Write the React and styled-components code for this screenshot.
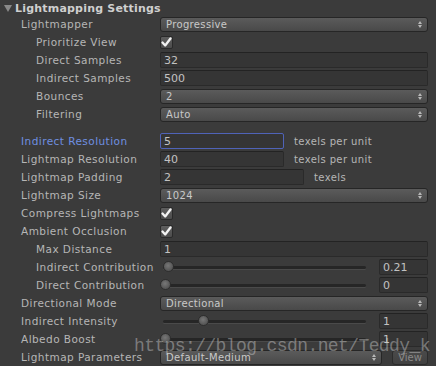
import React from "react";
import styled, { createGlobalStyle } from "styled-components";

const Global = createGlobalStyle`
  html, body { margin: 0; padding: 0; background: #3b3b3b; }
`;

const Panel = styled.div`
  position: relative;
  width: 436px;
  height: 366px;
  overflow: hidden;
  background: #3b3b3b;
  font-family: "DejaVu Sans", sans-serif;
  font-size: 10.5px;
  color: #b6b6b6;
  display: flex;
  flex-direction: column;
  padding-top: 1px;
  box-sizing: border-box;
`;

const Header = styled.div`
  display: flex;
  align-items: center;
  height: 14px;
  padding-left: 4px;
  gap: 3px;
  font-weight: bold;
  font-size: 11px;
  letter-spacing: 0.2px;
  color: #cfcfcf;
  flex-shrink: 0;
`;

const Triangle = styled.span`
  width: 0;
  height: 0;
  border-left: 4px solid transparent;
  border-right: 4px solid transparent;
  border-top: 7px solid #8a8a8a;
`;

const Row = styled.div`
  display: flex;
  align-items: center;
  height: 18px;
  flex-shrink: 0;
`;

const Spacer = styled.div`
  height: 9px;
  flex-shrink: 0;
`;

const Label = styled.div`
  width: 160px;
  box-sizing: border-box;
  padding-left: ${(p) => p.$indent}px;
  white-space: nowrap;
  letter-spacing: 0.45px;
  color: ${(p) => (p.$active ? "#6f8fe0" : "#b6b6b6")};
`;

const Value = styled.div`
  flex: 1;
  display: flex;
  align-items: center;
  padding-right: 8px;
  gap: 10px;
  min-width: 0;
`;

const Field = styled.div`
  box-sizing: border-box;
  height: 16px;
  width: ${(p) => (p.$w ? `${p.$w}px` : "auto")};
  flex: ${(p) => (p.$w ? "none" : "1")};
  background: #353535;
  border: 1px solid ${(p) => (p.$focus ? "#4f63b8" : "#2a2a2a")};
  border-top-color: ${(p) => (p.$focus ? "#4f63b8" : "#232323")};
  border-radius: 2px;
  padding-left: 3px;
  display: flex;
  align-items: center;
  color: #c2c2c2;
  font-size: 11px;
`;

const Unit = styled.span`
  font-size: 10px;
  letter-spacing: 0.4px;
  color: #b6b6b6;
`;

const Dropdown = styled.div`
  box-sizing: border-box;
  flex: 1;
  height: 15px;
  background: linear-gradient(#5b5b5b, #494949);
  border: 1px solid #262626;
  border-radius: 3px;
  display: flex;
  align-items: center;
  justify-content: space-between;
  padding: 0 5px 0 5px;
  color: #c9c9c9;
  font-size: 10px;
  letter-spacing: 0.35px;
`;

const Arrows = styled.span`
  display: flex;
  flex-direction: column;
  gap: 1px;
  &::before, &::after {
    content: "";
    width: 0;
    height: 0;
    border-left: 2px solid transparent;
    border-right: 2px solid transparent;
  }
  &::before { border-bottom: 3px solid #b8b8b8; }
  &::after { border-top: 3px solid #b8b8b8; }
`;

const Check = styled.div`
  box-sizing: border-box;
  width: 13px;
  height: 13px;
  background: linear-gradient(#5e5e5e, #4c4c4c);
  border: 1px solid #2a2a2a;
  border-radius: 2px;
  display: flex;
  align-items: center;
  justify-content: center;
`;

const Slider = styled.div`
  position: relative;
  flex: 1;
  height: 16px;
  display: flex;
  align-items: center;
`;

const Track = styled.div`
  flex: 1;
  height: 3px;
  margin: 0 3px;
  background: #262626;
  border-radius: 2px;
  box-shadow: 0 1px 0 #4a4a4a;
`;

const Thumb = styled.div`
  position: absolute;
  top: 2px;
  width: 11px;
  height: 11px;
  border-radius: 50%;
  background: radial-gradient(circle at 45% 40%, #777, #555 70%);
  border: 1px solid #2e2e2e;
  box-sizing: border-box;
`;

const SmallField = styled(Field)`
  width: 49px;
  flex: none;
`;

const ViewButton = styled.div`
  box-sizing: border-box;
  width: 36px;
  height: 15px;
  border: 1px solid #2c2c2c;
  border-radius: 3px;
  background: linear-gradient(#4a4a4a, #414141);
  color: #8a8a8a;
  font-size: 10px;
  display: flex;
  align-items: center;
  justify-content: center;
`;

const Watermark = styled.div`
  position: absolute;
  left: 134px;
  top: 336px;
  font-family: "Liberation Mono", monospace;
  font-size: 18px;
  letter-spacing: -0.6px;
  color: rgba(215, 215, 215, 0.42);
  white-space: nowrap;
  pointer-events: none;
`;

const CheckMark = () => (
  <svg width="11" height="11" viewBox="0 0 11 11">
    <path d="M1.5 5.5 L4.2 8.5 L9.5 1.5" fill="none" stroke="#f2f2f2" strokeWidth="2.3" strokeLinecap="round" strokeLinejoin="round" />
  </svg>
);

const DD = ({ children }) => (
  <Dropdown>
    <span>{children}</span>
    <Arrows />
  </Dropdown>
);

const SliderRow = ({ label, indent, pos, value }) => (
  <Row>
    <Label $indent={indent}>{label}</Label>
    <Value>
      <Slider>
        <Track />
        <Thumb style={{ left: `${pos}px` }} />
      </Slider>
      <SmallField>{value}</SmallField>
    </Value>
  </Row>
);

export default function App() {
  return (
    <>
      <Global />
      <Panel>
        <Header>
          <Triangle />
          <span>Lightmapping Settings</span>
        </Header>
        <Row>
          <Label $indent={21}>Lightmapper</Label>
          <Value><DD>Progressive</DD></Value>
        </Row>
        <Row>
          <Label $indent={36}>Prioritize View</Label>
          <Value><Check><CheckMark /></Check></Value>
        </Row>
        <Row>
          <Label $indent={36}>Direct Samples</Label>
          <Value><Field>32</Field></Value>
        </Row>
        <Row>
          <Label $indent={36}>Indirect Samples</Label>
          <Value><Field>500</Field></Value>
        </Row>
        <Row>
          <Label $indent={36}>Bounces</Label>
          <Value><DD>2</DD></Value>
        </Row>
        <Row>
          <Label $indent={36}>Filtering</Label>
          <Value><DD>Auto</DD></Value>
        </Row>
        <Spacer />
        <Row>
          <Label $indent={21} $active>Indirect Resolution</Label>
          <Value><Field $w={124} $focus>5</Field><Unit>texels per unit</Unit></Value>
        </Row>
        <Row>
          <Label $indent={21}>Lightmap Resolution</Label>
          <Value><Field $w={124}>40</Field><Unit>texels per unit</Unit></Value>
        </Row>
        <Row>
          <Label $indent={21}>Lightmap Padding</Label>
          <Value><Field $w={144}>2</Field><Unit>texels</Unit></Value>
        </Row>
        <Row>
          <Label $indent={21}>Lightmap Size</Label>
          <Value><DD>1024</DD></Value>
        </Row>
        <Row>
          <Label $indent={21}>Compress Lightmaps</Label>
          <Value><Check><CheckMark /></Check></Value>
        </Row>
        <Row>
          <Label $indent={21}>Ambient Occlusion</Label>
          <Value><Check><CheckMark /></Check></Value>
        </Row>
        <Row>
          <Label $indent={36}>Max Distance</Label>
          <Value><Field>1</Field></Value>
        </Row>
        <SliderRow label="Indirect Contribution" indent={36} pos={3} value="0.21" />
        <SliderRow label="Direct Contribution" indent={36} pos={0} value="0" />
        <Row>
          <Label $indent={21}>Directional Mode</Label>
          <Value><DD>Directional</DD></Value>
        </Row>
        <SliderRow label="Indirect Intensity" indent={21} pos={38} value="1" />
        <SliderRow label="Albedo Boost" indent={21} pos={0} value="1" />
        <Row>
          <Label $indent={21}>Lightmap Parameters</Label>
          <Value>
            <DD>Default-Medium</DD>
            <ViewButton>View</ViewButton>
          </Value>
        </Row>
        <Watermark>https://blog.csdn.net/Teddy_k</Watermark>
      </Panel>
    </>
  );
}
